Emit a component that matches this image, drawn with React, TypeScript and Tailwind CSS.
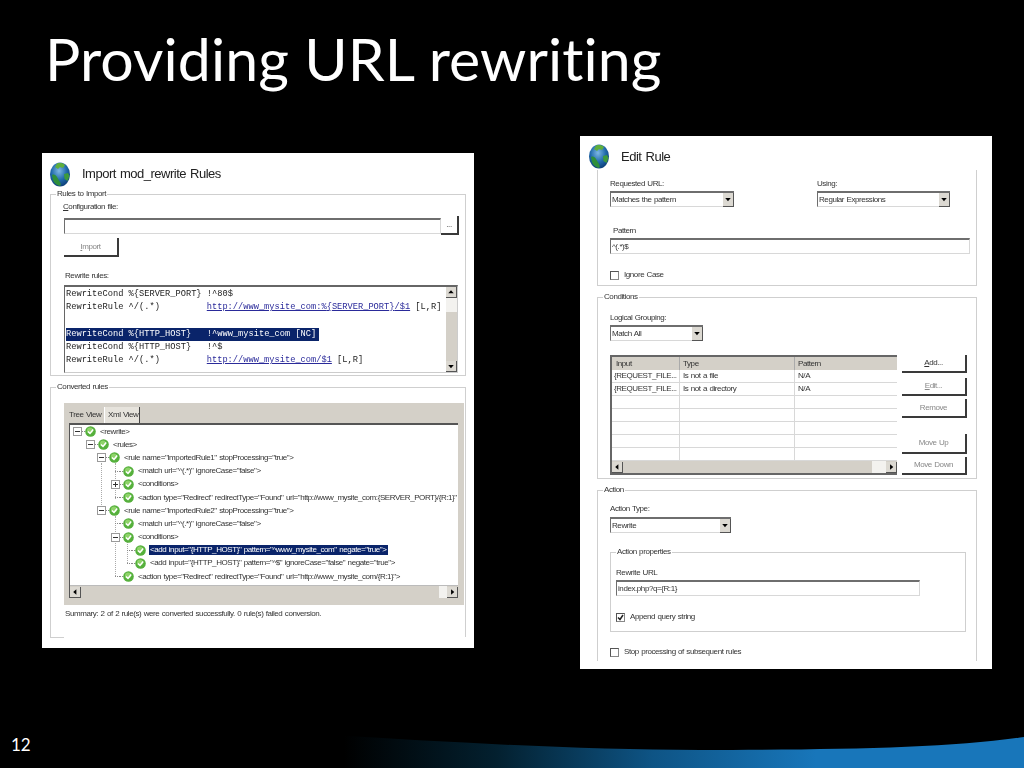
import React from "react";

const ui = "font-['Liberation_Sans',sans-serif] text-[8px] leading-[10px] tracking-[-0.42px] [word-spacing:0.6px] text-[#333]";

const Globe = ({ id }: { id: string }) => (
  <svg width="20" height="25" viewBox="0 0 20 25">
    <defs>
      <radialGradient id={id} cx="45%" cy="35%" r="70%">
        <stop offset="0%" stopColor="#7db8e4" />
        <stop offset="55%" stopColor="#2069ab" />
        <stop offset="100%" stopColor="#0a3870" />
      </radialGradient>
    </defs>
    <ellipse cx="10" cy="12.5" rx="10" ry="12" fill={`url(#${id})`} />
    <path d="M7 1.5c3-1 6-.5 8 1.5l-2 3-3-1-2 2-3-2z" fill="#5fae3c" />
    <path d="M2 13c2-1 4 0 5 2s2 3 3 5 1 3 0 4c-3-.5-6-3-7-6z" fill="#2f8f3a" />
    <path d="M14 12l4-1 1.5 3-2 5-3-2z" fill="#3d9a3c" />
  </svg>
);

const Check = () => (
  <svg width="11" height="11" viewBox="0 0 11 11" className="shrink-0">
    <circle cx="5.5" cy="5.5" r="5.3" fill="#55b03c" />
    <circle cx="5" cy="4.5" r="3" fill="#8fd36a" />
    <path d="M3 5.5l2 2 3.2-4" fill="none" stroke="#fff" strokeWidth="1.5" />
  </svg>
);

const Expander = ({ open }: { open: boolean }) => (
  <svg width="9" height="9" viewBox="0 0 9 9" className="shrink-0">
    <rect x="0.5" y="0.5" width="8" height="8" fill="#fff" stroke="#9a9a9a" />
    <path d={open ? "M2 4.5h5" : "M2 4.5h5M4.5 2v5"} stroke="#333" />
  </svg>
);

const Arrow = ({ dir, tall }: { dir: "up" | "down" | "left" | "right"; tall?: boolean }) => {
  const d = {
    up: "M5.5 3.5l-3 3.5h6z",
    down: "M5.5 8l-3-3.5h6z",
    left: "M3.5 5.5l3.5-3v6z",
    right: "M8 5.5l-3.5-3v6z",
  }[dir];
  return (
    <div className={`w-[11px] bg-[#dcd9d2] border-r border-b border-[#555] shrink-0 flex items-center ${tall ? "h-[14px]" : "h-[11px]"}`}>
      <svg width="10" height="10" viewBox="0 0 11 11">
        <path d={d} fill="#000" />
      </svg>
    </div>
  );
};

const Group = ({ title, className, inner, children }: { title: string; className: string; inner: string; children: React.ReactNode }) => (
  <fieldset className={`border border-[#cfcfcf] ${className}`}>
    <legend className="ml-[5px] px-[1px] h-[10px]">{title}</legend>
    <div className={inner}>{children}</div>
  </fieldset>
);

const Field = ({ className, children }: { className: string; children?: React.ReactNode }) => (
  <div className={`h-[16px] border-t-2 border-l border-[#6e6e6e] border-r-[#d8d8d8] border-r border-b border-b-[#d8d8d8] flex items-center pl-[1px] ${className}`}>
    {children}
  </div>
);

const Select = ({ className, value }: { className: string; value: string }) => (
  <div className={`h-[16px] border-t-2 border-l border-[#6e6e6e] border-b border-b-[#d8d8d8] flex items-center justify-between ${className}`}>
    <span className="pl-[1px]">{value}</span>
    <Arrow dir="down" tall />
  </div>
);

const Btn = ({ className, children, dim }: { className: string; children: React.ReactNode; dim?: boolean }) => (
  <div className={`flex items-center justify-center border-r-2 border-b-2 border-[#3a3a3a] ${dim ? "text-[#888]" : "text-[#333]"} ${className}`}>
    {children}
  </div>
);

const Box = ({ checked }: { checked?: boolean }) => (
  <div className="w-[9px] h-[9px] border border-[#888] border-t-[#555] border-l-[#555] shrink-0 bg-white flex items-center justify-center">
    {checked && (
      <svg width="7" height="7" viewBox="0 0 7 7">
        <path d="M1 3.5l2 2L6 1" fill="none" stroke="#222" strokeWidth="1.5" />
      </svg>
    )}
  </div>
);

const link = "text-[#2a2a9a] underline";
const key = "underline";

const treeRows: { pad: string; box?: boolean | "plus"; text: string; sel?: boolean }[] = [
  { pad: "pl-[3px]", box: true, text: '<rewrite>' },
  { pad: "pl-[16px]", box: true, text: '<rules>' },
  { pad: "pl-[27px]", box: true, text: '<rule name="ImportedRule1" stopProcessing="true">' },
  { pad: "pl-[41px]", text: '<match url="^(.*)" ignoreCase="false">' },
  { pad: "pl-[41px]", box: "plus", text: '<conditions>' },
  { pad: "pl-[41px]", text: '<action type="Redirect" redirectType="Found" url="http://www_mysite_com:{SERVER_PORT}/{R:1}"' },
  { pad: "pl-[27px]", box: true, text: '<rule name="ImportedRule2" stopProcessing="true">' },
  { pad: "pl-[41px]", text: '<match url="^(.*)" ignoreCase="false">' },
  { pad: "pl-[41px]", box: true, text: '<conditions>' },
  { pad: "pl-[53px]", text: '<add input="{HTTP_HOST}" pattern="^www_mysite_com" negate="true">', sel: true },
  { pad: "pl-[53px]", text: '<add input="{HTTP_HOST}" pattern="^$" ignoreCase="false" negate="true">' },
  { pad: "pl-[41px]", text: '<action type="Redirect" redirectType="Found" url="http://www_mysite_com/{R:1}">' },
];

const TreeRow = ({ row }: { row: (typeof treeRows)[number] }) => (
  <div className={`h-[13.2px] flex items-center whitespace-nowrap ${row.pad}`}>
    <div className="relative w-[9px] h-[9px] shrink-0 flex items-center">
      {row.box === true && <Expander open />}
      {row.box === "plus" && <Expander open={false} />}
      {!row.box && <div className="ml-[4px] w-[5px] border-t border-dotted border-[#888]" />}
    </div>
    <div className="w-[3px] shrink-0 border-t border-dotted border-[#888]" />
    <Check />
    <span className={`ml-[3px] px-[1px] ${row.sel ? "bg-[#0a246a] text-white" : ""}`}>{row.text}</span>
  </div>
);

const tableRows = [
  ["{REQUEST_FILE...", "Is not a file", "N/A"],
  ["{REQUEST_FILE...", "Is not a directory", "N/A"],
  ["", "", ""],
  ["", "", ""],
  ["", "", ""],
  ["", "", ""],
  ["", "", ""],
];

const ImportPanel = () => (
  <div className={`absolute left-[42px] top-[153px] w-[432px] h-[495px] bg-white px-[8px] blur-[0.4px] ${ui}`}>
    <div className="h-[36px] flex items-center pt-[6px]">
      <Globe id="globe-a" />
      <span className="ml-[12px] text-[13px] leading-[16px] tracking-[-0.5px] [word-spacing:1px] text-[#222]">Import mod_rewrite Rules</span>
    </div>
    <Group title="Rules to Import" className="h-[187px]" inner="pl-[13px]">
      <div className="mt-[3px] -ml-[1px]"><span className={key}>C</span>onfiguration file:</div>
      <div className="mt-[4px] flex items-center w-[395px]">
        <Field className="w-[377px] bg-white" />
        <Btn className="w-[18px] h-[19px]">...</Btn>
      </div>
      <Btn className="mt-[3px] w-[55px] h-[19px]" dim><span className={key}>I</span>mport</Btn>
      <div className="mt-[14px] ml-[1px]">Rewrite rules:</div>
      <div className="mt-[4px] w-[394px] h-[88px] flex border-t-2 border-l border-r border-[#666] border-r-[#ccc] border-b border-b-[#ccc]">
        <pre className="flex-1 pl-[1px] pt-[1px] font-['Liberation_Mono',monospace] text-[8.7px] leading-[13.2px] tracking-normal [word-spacing:0] text-[#222]">
          <div>RewriteCond %{"{"}SERVER_PORT{"}"} !^80$</div>
          <div>
            RewriteRule ^/(.*){"         "}
            <span className={link}>http://www_mysite_com:%{"{"}SERVER_PORT{"}"}/$1</span> [L,R]
          </div>
          <div>&nbsp;</div>
          <div className="bg-[#0a246a] text-white w-[253px]">RewriteCond %{"{"}HTTP_HOST{"}"}   !^www_mysite_com [NC]</div>
          <div>RewriteCond %{"{"}HTTP_HOST{"}"}   !^$</div>
          <div>
            RewriteRule ^/(.*){"         "}
            <span className={link}>http://www_mysite_com/$1</span> [L,R]
          </div>
        </pre>
        <div className="w-[11px] flex flex-col">
          <Arrow dir="up" />
          <div className="h-[14px] bg-[#f3f2ef]" />
          <div className="flex-1 bg-[#d4d0c8]" />
          <Arrow dir="down" />
        </div>
      </div>
    </Group>
    <Group title="Converted rules" className="mt-[6px] h-[255px] border-b-0" inner="pl-[13px]">
      <div className="mt-[11px] w-[400px] h-[202px] bg-[#d4d0c8] px-[5px]">
        <div className="h-[20px] flex items-end whitespace-nowrap">
          <div className="-ml-[3px] w-[38px] h-[17px] pl-[3px] flex items-center">Tree View</div>
          <div className="w-[36px] h-[16px] border-l border-white border-r border-r-[#444] bg-[#e6e3dc] pl-[3px] flex items-center">Xml View</div>
        </div>
        <div className="relative w-[389px] h-[175px] bg-white border-t-2 border-l border-[#555] flex flex-col">
          <div className="absolute left-[31px] top-[38px] h-[48px] border-l border-dotted border-[#aaa]" />
          <div className="absolute left-[45px] top-[38px] h-[36px] border-l border-dotted border-[#aaa]" />
          <div className="absolute left-[45px] top-[91px] h-[60px] border-l border-dotted border-[#aaa]" />
          <div className="absolute left-[57px] top-[116px] h-[22px] border-l border-dotted border-[#aaa]" />
          <div className="flex-1 relative">
            {treeRows.map((row, i) => (
              <TreeRow key={i} row={row} />
            ))}
          </div>
          <div className="flex h-[13px] bg-[#d4d0c8] border-t border-[#bbb] items-center">
            <Arrow dir="left" />
            <div className="flex-1 self-stretch" />
            <div className="w-[8px] self-stretch bg-[#f3f2ef]" />
            <Arrow dir="right" />
          </div>
        </div>
      </div>
      <div className="mt-[4px] ml-[1px]">Summary: 2 of 2 rule(s) were converted successfully. 0 rule(s) failed conversion.</div>
    </Group>
    <div className="w-[14px] h-px bg-[#cfcfcf]" />
  </div>
);

const EditPanel = () => (
  <div className={`absolute left-[580px] top-[136px] w-[412px] h-[533px] bg-white pl-[17px] pr-[15px] blur-[0.4px] ${ui}`}>
    <div className="h-[34px] -ml-[8px] flex items-center pt-[7px]">
      <Globe id="globe-b" />
      <span className="ml-[12px] text-[13px] leading-[16px] tracking-[-0.5px] [word-spacing:1px] text-[#222]">Edit Rule</span>
    </div>
    <div className="h-[116px] border-l border-r border-b border-[#cfcfcf] pl-[12px] pt-[9px]">
      <div className="flex">
        <div className="w-[207px]">
          <div>Requested URL:</div>
          <Select className="mt-[2px] w-[124px]" value="Matches the pattern" />
        </div>
        <div>
          <div>Using:</div>
          <Select className="mt-[2px] w-[133px]" value="Regular Expressions" />
        </div>
      </div>
      <div className="mt-[19px] ml-[3px]">Pattern</div>
      <Field className="mt-[2px] w-[360px]">^(.*)$</Field>
      <div className="mt-[16px] flex items-center gap-[5px]">
        <Box />
        <span>Ignore Case</span>
      </div>
    </div>
    <Group title="Conditions" className="mt-[6px] h-[187px]" inner="pl-[12px]">
      <div className="mt-[11px]">Logical Grouping:</div>
      <Select className="mt-[2px] w-[93px]" value="Match All" />
      <div className="mt-[14px] flex">
        <div className="w-[287px] h-[120px] border-t-2 border-l-2 border-b-2 border-[#666] flex flex-col">
          <div className="h-[13px] bg-[#d4d0c8] flex items-center">
            <div className="w-[68px] pl-[4px] border-r border-[#aaa] h-full flex items-center">Input</div>
            <div className="w-[115px] pl-[3px] border-r border-[#aaa] h-full flex items-center">Type</div>
            <div className="pl-[3px]">Pattern</div>
          </div>
          <div className="flex-1">
            {tableRows.map((cells, i) => (
              <div key={i} className="h-[13px] flex items-center border-b border-[#d8d8d8]">
                <div className="w-[68px] pl-[2px] border-r border-[#d8d8d8] h-full flex items-center whitespace-nowrap">{cells[0]}</div>
                <div className="w-[115px] pl-[3px] border-r border-[#d8d8d8] h-full flex items-center">{cells[1]}</div>
                <div className="pl-[3px]">{cells[2]}</div>
              </div>
            ))}
          </div>
          <div className="flex h-[12px] bg-[#d4d0c8] items-center">
            <Arrow dir="left" />
            <div className="flex-1 self-stretch" />
            <div className="w-[14px] self-stretch bg-[#f3f2ef]" />
            <Arrow dir="right" />
          </div>
        </div>
        <div className="ml-[5px] w-[65px] flex flex-col">
          <Btn className="h-[18px]"><span className={key}>A</span>dd...</Btn>
          <Btn className="mt-[5px] h-[18px]" dim><span className={key}>E</span>dit...</Btn>
          <Btn className="mt-[3px] h-[19px]" dim>Remove</Btn>
          <Btn className="mt-[16px] h-[20px]" dim>Move Up</Btn>
          <Btn className="mt-[3px] h-[18px]" dim>Move Down</Btn>
        </div>
      </div>
    </Group>
    <Group title="Action" className="mt-[6px] h-[176px] border-b-0" inner="pl-[12px]">
      <div className="mt-[9px]">Action Type:</div>
      <Select className="mt-[3px] w-[121px]" value="Rewrite" />
      <Group title="Action properties" className="mt-[14px] w-[356px] h-[85px]" inner="pl-[5px]">
        <div className="mt-[11px]">Rewrite URL</div>
        <Field className="mt-[2px] w-[304px]">index.php?q={"{"}R:1{"}"}</Field>
        <div className="mt-[16px] flex items-center gap-[5px]">
          <Box checked />
          <span>Append query string</span>
        </div>
      </Group>
      <div className="mt-[15px] flex items-center gap-[5px]">
        <Box />
        <span>Stop processing of subsequent rules</span>
      </div>
    </Group>
  </div>
);

const App = () => (
  <div className="relative w-[1024px] h-[768px] bg-black overflow-hidden">
    <h1 className="pl-[45px] pt-[19px] font-['Lato',sans-serif] text-[59px] tracking-[0.1px] leading-[80px] font-normal text-white [font-variant-ligatures:none]">
      Providing URL rewriting
    </h1>
    <ImportPanel />
    <EditPanel />
    <svg className="absolute left-0 bottom-0" width="1024" height="48" viewBox="0 0 1024 48">
      <defs>
        <linearGradient id="wave" x1="0" x2="1" y1="0" y2="0">
          <stop offset="0.02" stopColor="#000" />
          <stop offset="0.24" stopColor="#03202f" />
          <stop offset="0.465" stopColor="#0e5485" />
          <stop offset="0.7" stopColor="#1876ba" />
          <stop offset="1" stopColor="#1876ba" />
        </linearGradient>
      </defs>
      <path d="M330 15C450 22 580 30 700 30 840 30 950 28 1024 17V48H330z" fill="url(#wave)" />
    </svg>
    <div className="absolute left-[11px] top-[735px] font-['Lato',sans-serif] text-[17px] leading-[20px] text-white">12</div>
  </div>
);

export default App;
